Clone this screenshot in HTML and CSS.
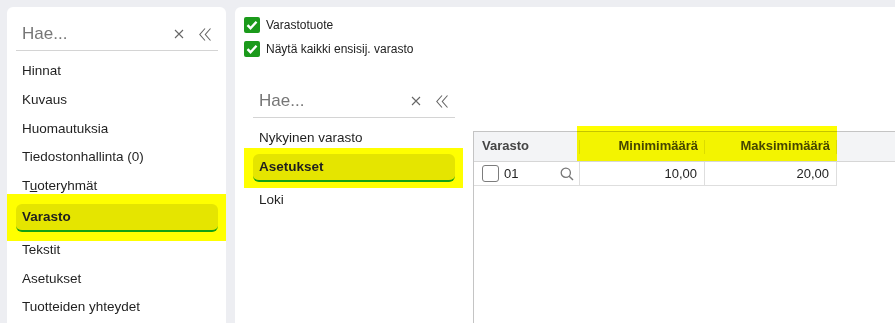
FILE: index.html
```html
<!DOCTYPE html>
<html lang="fi">
<head>
    <meta charset="UTF-8">
    <title>Varasto</title>
    <link rel="stylesheet" href="styles.css">
</head>
<body>
    <div class="page">
        <aside class="panel side">
            <div class="search">
                <span class="search-text">Hae...</span>
                <span class="search-icons">
                    <svg width="10" height="10" viewBox="0 0 10 10"><path d="M1 1L9 9M9 1L1 9" stroke="#666" stroke-width="1.1"/></svg>
                    <svg width="12" height="13" viewBox="0 0 12 13"><path d="M6 0.5L0.8 6.5L6 12.5M11.5 0.5L6.3 6.5L11.5 12.5" fill="none" stroke="#666" stroke-width="1.1"/></svg>
                </span>
            </div>
            <ul class="menu">
                <li>Hinnat</li>
                <li>Kuvaus</li>
                <li>Huomautuksia</li>
                <li>Tiedostonhallinta (0)</li>
                <li>T<u>u</u>oteryhmät</li>
                <li class="mark mark-lg"><span class="pill">Varasto</span></li>
                <li>Tekstit</li>
                <li>Asetukset</li>
                <li>Tuotteiden yhteydet</li>
            </ul>
        </aside>

        <main class="panel content">
            <div class="checks">
                <label class="check">
                    <span class="box"><svg width="12" height="10" viewBox="0 0 12 10"><path d="M1.5 5.2L4.5 8.2L10.5 1.8" fill="none" stroke="#fff" stroke-width="2.4"/></svg></span>
                    Varastotuote
                </label>
                <label class="check">
                    <span class="box"><svg width="12" height="10" viewBox="0 0 12 10"><path d="M1.5 5.2L4.5 8.2L10.5 1.8" fill="none" stroke="#fff" stroke-width="2.4"/></svg></span>
                    Näytä kaikki ensisij. varasto
                </label>
            </div>

            <div class="stock">
                <div class="subnav">
                    <div class="search">
                        <span class="search-text">Hae...</span>
                        <span class="search-icons">
                            <svg width="10" height="10" viewBox="0 0 10 10"><path d="M1 1L9 9M9 1L1 9" stroke="#666" stroke-width="1.1"/></svg>
                            <svg width="12" height="13" viewBox="0 0 12 13"><path d="M6 0.5L0.8 6.5L6 12.5M11.5 0.5L6.3 6.5L11.5 12.5" fill="none" stroke="#666" stroke-width="1.1"/></svg>
                        </span>
                    </div>
                    <ul class="menu">
                        <li>Nykyinen varasto</li>
                        <li class="mark mark-sm"><span class="pill">Asetukset</span></li>
                        <li>Loki</li>
                    </ul>
                </div>

                <div class="grid-wrap">
                    <div class="grid-row grid-head">
                        <div class="hcell">Varasto</div>
                        <div class="hcell num">Minimimäärä</div>
                        <div class="hcell num">Maksimimäärä</div>
                        <div></div>
                    </div>
                    <div class="grid-row grid-data">
                        <div class="cell cell-code">
                            <span class="row-box"></span>
                            <span>01</span>
                            <svg class="lookup" width="14" height="14" viewBox="0 0 14 14"><circle cx="5.8" cy="5.8" r="4.6" fill="none" stroke="#777" stroke-width="1.3"/><path d="M9.2 9.2L13 13" stroke="#777" stroke-width="1.4"/></svg>
                        </div>
                        <div class="cell num">10,00</div>
                        <div class="cell num">20,00</div>
                    </div>
                    <div class="mark-cols"></div>
                </div>
            </div>
        </main>
    </div>
</body>
</html>
```

FILE: styles.css
```css
body {
    margin: 0;
    background-color: #edeef2;
    font-family: "Liberation Sans", Arial, sans-serif;
    color: #1f1f1f;
}
.page {
    display: flex;
    gap: 9px;
    height: 100vh;
    padding: 7px 0 0 7px;
    box-sizing: border-box;
    overflow: hidden;
}
.panel {
    background: #fff;
    border-radius: 6px 6px 0 0;
}
.side, .subnav {
    width: 219px;
    flex: none;
    padding: 0 8px 0 9px;
    box-sizing: border-box;
}
.search {
    display: flex;
    align-items: center;
    height: 44px;
    padding: 17px 7px 6px 6px;
    border-bottom: 1px solid #d4d4d4;
    box-sizing: border-box;
}
.search-text {
    flex: 1;
    font-size: 17px;
    color: #767676;
}
.search-icons {
    display: flex;
    align-items: center;
    gap: 15px;
}
.menu {
    list-style: none;
    margin: 0;
    padding: 6px 0 0;
    font-size: 13.5px;
}
.menu li {
    line-height: 28.75px;
    padding-left: 6px;
}
.menu .mark {
    background: #ff0;
    line-height: normal;
}
.mark-lg {
    margin: -7px -8px -5px -9px;
    padding: 10px 8px 9px 9px !important;
}
.mark-sm {
    margin: -5px -8px -2px -9px;
    padding: 6px 8px 6px 9px !important;
}
.pill {
    display: block;
    height: 26px;
    line-height: 26px;
    padding-left: 6px;
    background: #e5e500;
    border-bottom: 2px solid #14a014;
    border-radius: 6px;
    font-weight: bold;
}

/* right card */
.content {
    flex: 1;
    display: flex;
    flex-direction: column;
    padding: 6px 0 0 9px;
    border-radius: 6px 0 0 0;
    min-width: 0;
}
.check {
    display: flex;
    align-items: center;
    gap: 6px;
    height: 24px;
    font-size: 12px;
    color: #222;
}
.box {
    width: 16px;
    height: 16px;
    display: flex;
    align-items: center;
    justify-content: center;
    background: #1b9a1b;
    border-radius: 2px;
}
.stock {
    display: flex;
    gap: 10px;
    flex: 1;
    margin-top: 13px;
    margin-left: -9px;
    padding-left: 9px;
}

/* grid */
.grid-wrap {
    position: relative;
    flex: 1;
    margin-top: 57px;
    border-left: 1px solid #c4c4c4;
    border-top: 1px solid #c4c4c4;
}
.grid-row {
    display: grid;
    grid-template-columns: 106px 125px 132px 1fr;
}
.grid-head {
    height: 30px;
    background: #f3f4f6;
    border-bottom: 1px solid #d6d6d6;
    box-sizing: border-box;
    font-size: 13px;
    font-weight: bold;
    color: #454545;
}
.hcell {
    position: relative;
    display: flex;
    align-items: center;
    padding: 0 7px 2px 8px;
}
.hcell.num {
    justify-content: flex-end;
}
.hcell::after {
    content: "";
    position: absolute;
    right: 0;
    top: 8px;
    width: 1px;
    height: 14px;
    background: #dcdcdc;
}
.grid-data {
    height: 24px;
    font-size: 13px;
    color: #222;
}
.cell {
    border-right: 1px solid #dedede;
    border-bottom: 1px solid #dedede;
    line-height: 23px;
}
.cell.num {
    text-align: right;
    padding-right: 7px;
}
.cell-code {
    display: flex;
    align-items: center;
    gap: 5px;
    padding: 0 5px 0 8px;
}
.row-box {
    width: 17px;
    height: 17px;
    box-sizing: border-box;
    border: 1.5px solid #7c7c7c;
    border-radius: 3px;
}
.lookup {
    margin-left: auto;
}
.mark-cols {
    position: absolute;
    left: 103px;
    top: -6px;
    width: 260px;
    height: 35px;
    background: #ff0;
    mix-blend-mode: multiply;
    pointer-events: none;
}
```
